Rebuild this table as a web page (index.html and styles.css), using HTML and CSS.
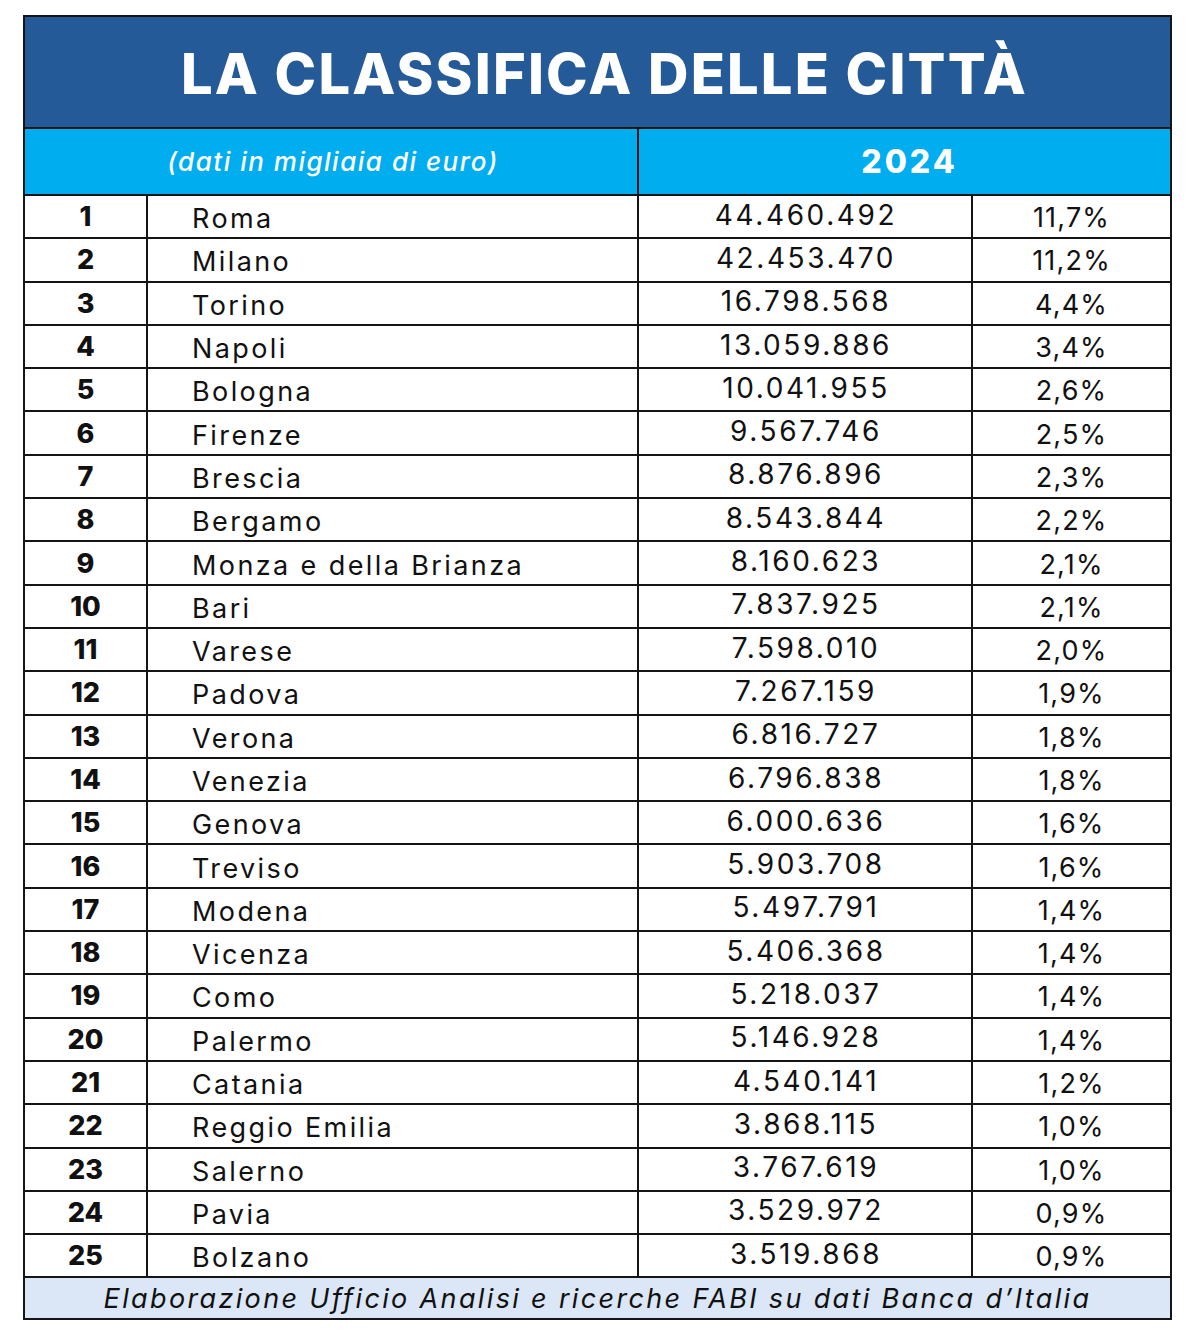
FILE: index.html
```html
<!DOCTYPE html>
<html lang="it">
<head>
<meta charset="utf-8">
<title>La classifica delle città</title>
<link rel="stylesheet" href="styles.css">
</head>
<body>
<table class="rank">
  <colgroup>
    <col class="c-pos">
    <col class="c-city">
    <col class="c-val">
    <col class="c-pct">
  </colgroup>
  <thead>
    <tr class="title-row"><th colspan="4">LA CLASSIFICA DELLE CITTÀ</th></tr>
    <tr class="head-row"><th colspan="2" class="unit">(dati in migliaia di euro)</th><th colspan="2" class="year">2024</th></tr>
  </thead>
  <tbody>
    <tr><td class="pos">1</td><td class="city">Roma</td><td class="val">44.460.492</td><td class="pct">11,7%</td></tr>
    <tr><td class="pos">2</td><td class="city">Milano</td><td class="val">42.453.470</td><td class="pct">11,2%</td></tr>
    <tr><td class="pos">3</td><td class="city">Torino</td><td class="val">16.798.568</td><td class="pct">4,4%</td></tr>
    <tr><td class="pos">4</td><td class="city">Napoli</td><td class="val">13.059.886</td><td class="pct">3,4%</td></tr>
    <tr><td class="pos">5</td><td class="city">Bologna</td><td class="val">10.041.955</td><td class="pct">2,6%</td></tr>
    <tr><td class="pos">6</td><td class="city">Firenze</td><td class="val">9.567.746</td><td class="pct">2,5%</td></tr>
    <tr><td class="pos">7</td><td class="city">Brescia</td><td class="val">8.876.896</td><td class="pct">2,3%</td></tr>
    <tr><td class="pos">8</td><td class="city">Bergamo</td><td class="val">8.543.844</td><td class="pct">2,2%</td></tr>
    <tr><td class="pos">9</td><td class="city">Monza e della Brianza</td><td class="val">8.160.623</td><td class="pct">2,1%</td></tr>
    <tr><td class="pos">10</td><td class="city">Bari</td><td class="val">7.837.925</td><td class="pct">2,1%</td></tr>
    <tr><td class="pos">11</td><td class="city">Varese</td><td class="val">7.598.010</td><td class="pct">2,0%</td></tr>
    <tr><td class="pos">12</td><td class="city">Padova</td><td class="val">7.267.159</td><td class="pct">1,9%</td></tr>
    <tr><td class="pos">13</td><td class="city">Verona</td><td class="val">6.816.727</td><td class="pct">1,8%</td></tr>
    <tr><td class="pos">14</td><td class="city">Venezia</td><td class="val">6.796.838</td><td class="pct">1,8%</td></tr>
    <tr><td class="pos">15</td><td class="city">Genova</td><td class="val">6.000.636</td><td class="pct">1,6%</td></tr>
    <tr><td class="pos">16</td><td class="city">Treviso</td><td class="val">5.903.708</td><td class="pct">1,6%</td></tr>
    <tr><td class="pos">17</td><td class="city">Modena</td><td class="val">5.497.791</td><td class="pct">1,4%</td></tr>
    <tr><td class="pos">18</td><td class="city">Vicenza</td><td class="val">5.406.368</td><td class="pct">1,4%</td></tr>
    <tr><td class="pos">19</td><td class="city">Como</td><td class="val">5.218.037</td><td class="pct">1,4%</td></tr>
    <tr><td class="pos">20</td><td class="city">Palermo</td><td class="val">5.146.928</td><td class="pct">1,4%</td></tr>
    <tr><td class="pos">21</td><td class="city">Catania</td><td class="val">4.540.141</td><td class="pct">1,2%</td></tr>
    <tr><td class="pos">22</td><td class="city">Reggio Emilia</td><td class="val">3.868.115</td><td class="pct">1,0%</td></tr>
    <tr><td class="pos">23</td><td class="city">Salerno</td><td class="val">3.767.619</td><td class="pct">1,0%</td></tr>
    <tr><td class="pos">24</td><td class="city">Pavia</td><td class="val">3.529.972</td><td class="pct">0,9%</td></tr>
    <tr><td class="pos">25</td><td class="city">Bolzano</td><td class="val">3.519.868</td><td class="pct">0,9%</td></tr>
  </tbody>
  <tfoot>
    <tr class="foot-row"><td colspan="4">Elaborazione Ufficio Analisi e ricerche FABI su dati Banca d’Italia</td></tr>
  </tfoot>
</table>
</body>
</html>
```

FILE: styles.css
```css
html, body {
  margin: 0;
  padding: 0;
  background: #ffffff;
}

body {
  padding: 15px 0 0 23px;
  font-family: Inter, "Noto Sans", "Liberation Sans", sans-serif;
  color: #111111;
}

.rank {
  border-collapse: collapse;
  table-layout: fixed;
  width: 1149px;
  border: 2px solid #151515;
}

.c-pos { width: 123px; }
.c-city { width: 491px; }
.c-val { width: 334px; }
.c-pct { width: 199px; }

.rank th,
.rank td {
  border: 2px solid #151515;
  padding: 0;
}

.title-row th {
  height: 106px;
  background: #245a97;
  color: #ffffff;
  font-size: 56px;
  font-weight: 800;
  letter-spacing: 2.2px;
  text-align: center;
  vertical-align: middle;
  padding-left: 14px;
  padding-top: 4px;
}

.head-row th {
  height: 65px;
  background: #00adee;
  color: #ffffff;
  text-align: center;
  vertical-align: middle;
}

.head-row .unit {
  font-size: 26px;
  font-weight: 500;
  font-style: italic;
  letter-spacing: 1.5px;
  padding-left: 4px;
}

.head-row .year {
  font-size: 32px;
  font-weight: 800;
  letter-spacing: 3px;
  padding-left: 10px;
}

tbody tr {
  height: 43.3px;
}

tbody td {
  font-size: 27px;
  line-height: 1;
  vertical-align: middle;
}

.pos {
  text-align: center;
  font-weight: 800;
  padding-left: 2px;
  padding-top: 2px;
}

.city {
  padding-left: 44px !important;
  letter-spacing: 2.4px;
  padding-top: 4px !important;
}

.val {
  text-align: center;
  font-size: 28px !important;
  letter-spacing: 2.6px;
  padding-bottom: 4px !important;
  padding-left: 2px !important;
}

.pct {
  text-align: center;
  letter-spacing: 1.2px;
  padding-top: 2px !important;
}

.foot-row td {
  height: 40px;
  background: #dbe7f6;
  text-align: center;
  font-size: 27px;
  font-style: italic;
  letter-spacing: 2.35px;
  vertical-align: middle;
}
```
